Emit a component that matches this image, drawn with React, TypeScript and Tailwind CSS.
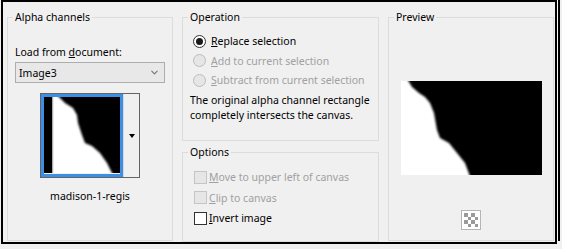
import { ChevronDown } from "lucide-react";

const font = { fontFamily: '"Segoe UI", "Noto Sans", sans-serif' };

function Radio({ checked, disabled }: { checked?: boolean; disabled?: boolean }) {
  return (
    <span
      className={`flex h-[13px] w-[13px] items-center justify-center rounded-full border ${
        disabled ? "border-[#bcbcbc] bg-[#e6e6e6]" : "border-[#333] bg-white"
      }`}
    >
      {checked && <span className="h-[7px] w-[7px] rounded-full bg-[#1a1a1a]" />}
    </span>
  );
}

function Check({ disabled }: { disabled?: boolean }) {
  return (
    <span
      className={`block h-[13px] w-[13px] border ${
        disabled ? "border-[#c5c5c5] bg-[#e6e6e6]" : "border-[#333] bg-white"
      }`}
    />
  );
}

function Thumb() {
  return (
    <svg width="76" height="76" viewBox="0 0 76 76" className="block">
      <defs>
        <filter id="b1" x="-10%" y="-10%" width="120%" height="120%">
          <feGaussianBlur stdDeviation="0.9" />
        </filter>
      </defs>
      <rect width="76" height="76" fill="#000" />
      <polygon
        filter="url(#b1)"
        fill="#fff"
        points="8,-2 13,-2 21,6 29,11 33,18 34,26 38,38 41,46 48,49 56,56 63,66 69,78 8,78"
      />
      <rect width="8" height="76" fill="#000" />
    </svg>
  );
}

function Preview() {
  return (
    <svg width="141" height="94" viewBox="0 0 141 94" className="block">
      <defs>
        <filter id="b2" x="-10%" y="-10%" width="120%" height="120%">
          <feGaussianBlur stdDeviation="1.1" />
        </filter>
        <clipPath id="c2">
          <rect width="141" height="94" />
        </clipPath>
      </defs>
      <rect width="141" height="94" fill="#000" />
      <g clipPath="url(#c2)">
        <polygon
          filter="url(#b2)"
          fill="#fff"
          points="-4,-4 5,-4 11,6 18,12 24,16 29,22 33,32 36,49 39,57 48,62 56,72 64,82 70,98 -4,98"
        />
      </g>
    </svg>
  );
}

function Checker() {
  return (
    <div className="grid h-[20px] w-[20px] grid-cols-4 grid-rows-4 border border-[#b5b5b5] bg-white p-[2px]">
      {Array.from({ length: 16 }).map((_, i) => (
        <span
          key={i}
          className={(Math.floor(i / 4) + i) % 2 === 0 ? "bg-[#9a9a9a]" : "bg-white"}
        />
      ))}
    </div>
  );
}

export default function App() {
  return (
    <div className="h-[249px] w-[562px] bg-[#f0f0f0] text-[10.5px] leading-[16px] text-black" style={font}>
      <div className="ml-[1px] flex h-[244px] w-[556px] gap-[9px] border-2 border-black pl-[4px] pt-[7px] shadow-[2px_-2px_0_-1px_#f8f8f8,4px_-2px_0_-1px_#000]">
        {/* Alpha channels */}
        <fieldset className="h-[232px] w-[166px] border border-[#dcdcdc] px-[7px]">
          <legend className="-ml-[2px] px-[2px]">Alpha channels</legend>
          <div className="mt-[19px]">
            Load from <u>d</u>ocument:
          </div>
          <div className="mt-[2px] flex h-[21px] w-[150px] items-center justify-between border border-[#adadad] bg-[#e8e8e8] pl-[3px] pr-[4px]">
            <span>Image3</span>
            <ChevronDown size={11} strokeWidth={2.2} className="text-[#707070]" />
          </div>
          <div className="ml-[25px] mt-[10px] flex h-[85px] w-[100px] border border-[#646464]">
            <div className="border-[3px] border-[#3d8ee6]">
              <Thumb />
            </div>
            <div className="flex flex-1 items-center justify-center border-l border-[#d8d8d8]">
              <span className="h-0 w-0 border-x-[3.5px] border-t-[4px] border-x-transparent border-t-black" />
            </div>
          </div>
          <div className="mt-[10px] text-center">madison-1-regis</div>
        </fieldset>

        {/* Operation / Options */}
        <div className="flex w-[197px] flex-col gap-[3px]">
          <fieldset className="h-[132px] border border-[#dcdcdc] px-[7px]">
            <legend className="-ml-[2px] px-[2px]">Operation</legend>
            <div className="mt-[8px] flex flex-col gap-[3.5px] pl-[3px]">
              <label className="flex items-center gap-[5px]">
                <Radio checked />
                <span><u>R</u>eplace selection</span>
              </label>
              <label className="flex items-center gap-[5px] text-[#a0a0a0]">
                <Radio disabled />
                <span><u>A</u>dd to current selection</span>
              </label>
              <label className="flex items-center gap-[5px] text-[#a0a0a0]">
                <Radio disabled />
                <span><u>S</u>ubtract from current selection</span>
              </label>
            </div>
            <p className="mt-[5px] whitespace-nowrap leading-[15px]">
              The original alpha channel rectangle
              <br />
              completely intersects the canvas.
            </p>
          </fieldset>
          <fieldset className="flex-1 border border-[#dcdcdc] px-[7px]">
            <legend className="-ml-[2px] px-[2px]">Options</legend>
            <div className="mt-[9px] flex flex-col gap-[4.5px] pl-[4px]">
              <label className="flex items-center gap-[2px] text-[#a0a0a0]">
                <Check disabled />
                <span><u>M</u>ove to upper left of canvas</span>
              </label>
              <label className="flex items-center gap-[2px] text-[#a0a0a0]">
                <Check disabled />
                <span><u>C</u>lip to canvas</span>
              </label>
              <label className="flex items-center gap-[2px]">
                <Check />
                <span><u>I</u>nvert image</span>
              </label>
            </div>
          </fieldset>
        </div>

        {/* Preview */}
        <fieldset className="h-[232px] w-[166px] border border-[#dcdcdc] px-[7px]">
          <legend className="-ml-[2px] px-[2px]">Preview</legend>
          <div className="mt-[56px] flex justify-center">
            <Preview />
          </div>
          <div className="mt-[35px] flex justify-center">
            <Checker />
          </div>
        </fieldset>
      </div>
    </div>
  );
}
